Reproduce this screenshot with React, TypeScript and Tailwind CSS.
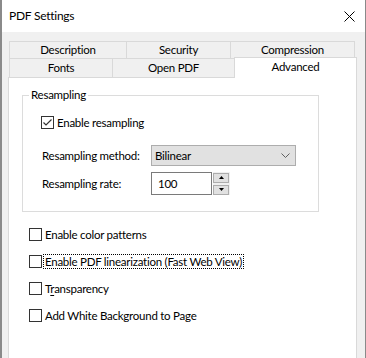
const font = { fontFamily: 'Lato, "Liberation Sans", sans-serif' };

const Box = ({ checked }: { checked?: boolean }) => (
    <span className="w-[13px] h-[13px] border border-[#333333] bg-white flex items-center justify-center shrink-0">
        {checked && (
            <svg width="11" height="11" viewBox="0 0 11 11">
                <path d="M1.5 5.5 L4 8 L9.5 2.5" fill="none" stroke="#333333" strokeWidth="1.2" />
            </svg>
        )}
    </span>
);

interface CheckRowProps {
    label: React.ReactNode;
    checked?: boolean;
    focused?: boolean;
    className?: string;
}

const CheckRow = ({ label, checked, focused, className }: CheckRowProps) => (
    <div className={`flex items-center gap-px ${className ?? ''}`}>
        <Box checked={checked} />
        <span
            className={`px-px leading-[13px] whitespace-nowrap border ${focused ? 'border-dotted border-black' : 'border-transparent'}`}
        >
            {label}
        </span>
    </div>
);

const Tab = ({ label, className }: { label: string; className: string }) => (
    <div className={`flex items-center justify-center border-t border-l border-r border-[#d9d9d9] ${className}`}>
        {label}
    </div>
);

export default function App() {
    return (
        <div
            className="w-[366px] h-[358px] overflow-hidden flex flex-col border-l-2 border-r border-[#8a8a8a] text-[11.5px] tracking-[-0.25px] text-black"
            style={font}
        >
            <div className="h-[32px] bg-white flex items-center pl-[7px] shrink-0">
                <span className="pb-px text-[12px]">PDF Settings</span>
                <svg className="ml-auto mr-[10px]" width="11" height="11" viewBox="0 0 11 11">
                    <path d="M0.5 0.5 L10.5 10.5 M10.5 0.5 L0.5 10.5" stroke="#000" strokeWidth="1" />
                </svg>
            </div>

            <div className="flex-1 bg-[#f0f0f0] pt-[9px] pl-[6px]">
                <div className="w-[349px]">
                    <div className="flex pl-px">
                        <Tab label="Description" className="w-[118px] h-[17px]" />
                        <Tab label="Security" className="w-[105px] h-[17px] -ml-px" />
                        <Tab label="Compression" className="w-[125px] h-[17px] -ml-px" />
                    </div>
                    <div className="flex pl-px items-end">
                        <Tab label="Fonts" className="w-[104px] h-[19px]" />
                        <Tab label="Open PDF" className="w-[123px] h-[19px] -ml-px" />
                        <Tab
                            label="Advanced"
                            className="w-[123px] h-[21px] -ml-px -mt-px -mb-px bg-white relative z-10 pb-[3px]"
                        />
                    </div>

                    <div className="h-[300px] bg-white border border-[#d9d9d9] pt-[9px] pl-[13px]">
                        <fieldset className="w-[297px] h-[125px] border border-[#dcdcdc]">
                            <legend className="ml-[6px] px-[2px] leading-[16px]">Resampling</legend>
                            <CheckRow label="Enable resampling" checked className="ml-[18px] mt-[12px]" />
                            <div className="flex items-center ml-[19px] mt-[15px]">
                                <span className="w-[109px] whitespace-nowrap">Resampling method:</span>
                                <div className="w-[145px] h-[21px] bg-[#e1e1e1] border border-[#adadad] flex items-center pl-[3px] pr-[5px]">
                                    <span>Bilinear</span>
                                    <svg className="ml-auto" width="9" height="5" viewBox="0 0 9 5">
                                        <path d="M0.5 0.5 L4.5 4.5 L8.5 0.5" fill="none" stroke="#606060" strokeWidth="1" />
                                    </svg>
                                </div>
                            </div>
                            <div className="flex items-center ml-[19px] mt-[6px]">
                                <span className="w-[109px] whitespace-nowrap">Resampling rate:</span>
                                <div className="w-[61px] h-[23px] border border-[#7a7a7a] bg-white flex items-center pl-[6px]">
                                    100
                                </div>
                                <div className="ml-px w-[17px] h-[23px] bg-[#f0f0f0] flex flex-col justify-center gap-[2px]">
                                    <div className="w-[16px] h-[10px] bg-[#e1e1e1] border border-[#adadad] flex items-center justify-center">
                                        <svg width="5" height="3" viewBox="0 0 5 3">
                                            <path d="M0 3 L2.5 0 L5 3 Z" fill="#000" />
                                        </svg>
                                    </div>
                                    <div className="w-[16px] h-[10px] bg-[#e1e1e1] border border-[#adadad] flex items-center justify-center">
                                        <svg width="5" height="3" viewBox="0 0 5 3">
                                            <path d="M0 0 L5 0 L2.5 3 Z" fill="#000" />
                                        </svg>
                                    </div>
                                </div>
                            </div>
                        </fieldset>

                        <div className="mt-[9px] ml-[7px] flex flex-col">
                            <CheckRow label="Enable color patterns" className="h-[27px]" />
                            <CheckRow label="Enable PDF linearization (Fast Web View)" focused className="h-[27px]" />
                            <CheckRow
                                label={
                                    <>
                                        T<span className="underline underline-offset-2">r</span>ansparency
                                    </>
                                }
                                className="h-[27px]"
                            />
                            <CheckRow label="Add White Background to Page" className="h-[27px]" />
                        </div>
                    </div>
                </div>
            </div>
        </div>
    );
}
